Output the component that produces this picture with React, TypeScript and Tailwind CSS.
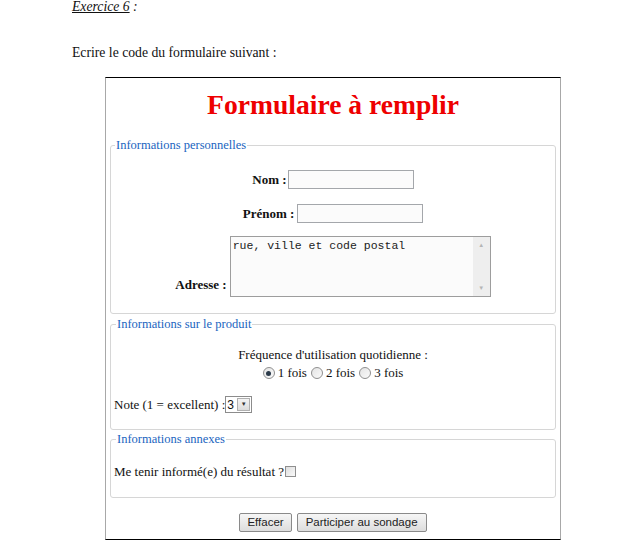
import React from "react";

const serif = "font-['Liberation_Serif','Times_New_Roman',serif]";

function Radio({ checked, label }: { checked?: boolean; label: string }) {
  return (
    <span className="inline-flex items-center gap-[3px]">
      <span className="flex h-[12px] w-[12px] items-center justify-center rounded-full border border-[#8f8f8f] bg-gradient-to-br from-[#e4e4e4] to-[#fafafa]">
        {checked && <span className="h-[5px] w-[5px] rounded-full bg-[#2b3a4a]" />}
      </span>
      <span>{label}</span>
    </span>
  );
}

function Legend({ children }: { children: React.ReactNode }) {
  return (
    <legend className="ml-[2px] px-[1px] text-[12.5px] leading-[14px] text-[#1a64c0]">
      {children}
    </legend>
  );
}

export default function App() {
  return (
    <div className={`${serif} h-[544px] w-[628px] overflow-hidden bg-white pl-[72px] text-[13px] text-[#111]`}>
      <p className="mt-[-1px] text-[13.7px] leading-[15px] italic">
        <span className="underline">Exercice 6</span> :
      </p>
      <p className="mt-[31px] text-[13.7px] leading-[15px]">Ecrire le code du formulaire suivant :</p>

      <div className="mt-[17px] ml-[33px] h-[463px] w-[456px] border-x border-x-[#a8a8a8] border-y border-y-black px-[4px]">
        <h1 className="mt-[10px] text-center text-[27.6px] font-bold leading-[34px] text-[#ee0000]">
          Formulaire à remplir
        </h1>

        <fieldset className="mt-[16px] h-[176px] rounded-[3px] border border-[#d6d6d6] px-[2px]">
          <Legend>Informations personnelles</Legend>
          <div className="mt-[18px] flex items-center justify-center">
            <span className="font-bold">Nom :</span>
            <span className="ml-[1px] h-[19px] w-[126px] border border-[#a4a7ab] bg-[#fbfbfb]" />
          </div>
          <div className="mt-[14px] flex items-center justify-center">
            <span className="font-bold">Prénom :</span>
            <span className="ml-[3px] h-[19px] w-[126px] border border-[#a4a7ab] bg-[#fbfbfb]" />
          </div>
          <div className="mt-[13px] flex items-end justify-center">
            <span className="mb-[3px] font-bold">Adresse :</span>
            <div className="ml-[3px] flex h-[61px] w-[261px] border border-[#9d9d9d] bg-[#fbfbfb]">
              <div className="flex-1 pl-[2px] pt-[2px] font-['Liberation_Mono','Courier_New',monospace] text-[11.5px] leading-[13px] text-[#222]">
                rue, ville et code postal
              </div>
              <div className="flex w-[17px] flex-col items-center justify-between bg-[#eeeeee] py-[5px] text-[6px] leading-[6px] text-[#b5b5b5]">
                <span>▲</span>
                <span>▼</span>
              </div>
            </div>
          </div>
        </fieldset>

        <fieldset className="mt-[3px] h-[113px] rounded-[3px] border border-[#d6d6d6] px-[3px]">
          <Legend>Informations sur le produit</Legend>
          <p className="mt-[15px] text-center leading-[18px]">Fréquence d'utilisation quotidienne :</p>
          <div className="flex justify-center gap-[4px] leading-[18px]">
            <Radio checked label="1 fois" />
            <Radio label="2 fois" />
            <Radio label="3 fois" />
          </div>
          <div className="mt-[13px] flex items-center">
            <span>Note (1 = excellent) :</span>
            <span className="flex h-[17px] w-[27px] items-center justify-between border border-[#8c8c8c] bg-white pl-[1px] pr-[1px] font-['Liberation_Sans',Arial,sans-serif] text-[12px]">
              3
              <span className="flex h-[13px] w-[13px] items-center justify-center border border-[#b0b0b0] bg-gradient-to-b from-[#f4f4f4] to-[#dcdcdc] text-[6px] text-[#333]">
                ▼
              </span>
            </span>
          </div>
        </fieldset>

        <fieldset className="mt-[2px] h-[66px] rounded-[3px] border border-[#d6d6d6] px-[3px]">
          <Legend>Informations annexes</Legend>
          <div className="mt-[16px] flex items-center">
            <span>Me tenir informé(e) du résultat ?</span>
            <span className="ml-[1px] h-[11px] w-[11px] border border-[#8f8f8f] bg-gradient-to-br from-[#dedede] to-[#fafafa]" />
          </div>
        </fieldset>

        <div className="mt-[15px] flex justify-center gap-[5px] font-['Liberation_Sans',Arial,sans-serif] text-[11.5px] text-[#222]">
          <button className="h-[19px] rounded-[2px] border border-[#8a8a8a] bg-gradient-to-b from-[#f6f6f6] to-[#dddddd] px-[7px] leading-[17px]">
            Effacer
          </button>
          <button className="h-[19px] rounded-[2px] border border-[#8a8a8a] bg-gradient-to-b from-[#f6f6f6] to-[#dddddd] px-[8px] leading-[17px]">
            Participer au sondage
          </button>
        </div>
      </div>
    </div>
  );
}
